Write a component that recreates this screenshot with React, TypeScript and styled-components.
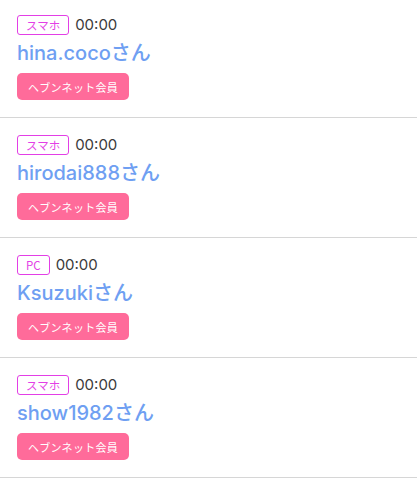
import React from "react";
import { createGlobalStyle, styled } from "styled-components";

const GlobalStyle = createGlobalStyle`
  html, body {
    margin: 0;
    padding: 0;
    background: #fff;
  }
  body {
    font-family: Inter, "Noto Sans CJK JP", sans-serif;
  }
`;

type Member = {
  device: string;
  time: string;
  name: string;
};

const members: Member[] = [
  { device: "スマホ", time: "00:00", name: "hina.coco" },
  { device: "スマホ", time: "00:00", name: "hirodai888" },
  { device: "PC", time: "00:00", name: "Ksuzuki" },
  { device: "スマホ", time: "00:00", name: "show1982" },
];

function App() {
  return (
    <>
      <GlobalStyle />
      <List>
        {members.map((m, i) => (
          <Item key={i}>
            <Meta>
              <DeviceTag>{m.device}</DeviceTag>
              <Time>{m.time}</Time>
            </Meta>
            <Name>{m.name}さん</Name>
            <MemberBadge>ヘブンネット会員</MemberBadge>
          </Item>
        ))}
      </List>
    </>
  );
}

const List = styled.ul`
  list-style: none;
  margin: 0;
  padding: 0;
`;

const Item = styled.li`
  padding: 17px 17px 17px;
  border-bottom: 1px solid #d6d6d6;
  &:first-child {
    padding-top: 15px;
  }
`;

const Meta = styled.div`
  display: flex;
  align-items: center;
  gap: 6px;
  height: 20px;
`;

const DeviceTag = styled.span`
  box-sizing: border-box;
  height: 20px;
  padding: 0 8px;
  border: 1px solid #e33fe6;
  border-radius: 3px;
  color: #e33fe6;
  font-family: "Noto Sans CJK JP", sans-serif;
  font-size: 11.5px;
  line-height: 18px;
`;

const Time = styled.span`
  color: #3a3a3a;
  font-size: 15px;
  font-weight: 400;
  line-height: 20px;
`;

const Name = styled.div`
  margin: 4px 0 6px;
  color: #6f9ff2;
  font-size: 20px;
  font-weight: 500;
  line-height: 28px;
`;

const MemberBadge = styled.div`
  display: flex;
  align-items: center;
  justify-content: center;
  box-sizing: border-box;
  width: 112px;
  height: 27px;
  border-radius: 5px;
  background: #ff6b9a;
  color: #fff;
  font-family: "Noto Sans CJK JP", sans-serif;
  font-size: 11px;
  letter-spacing: 0.3px;
`;

export default App;
